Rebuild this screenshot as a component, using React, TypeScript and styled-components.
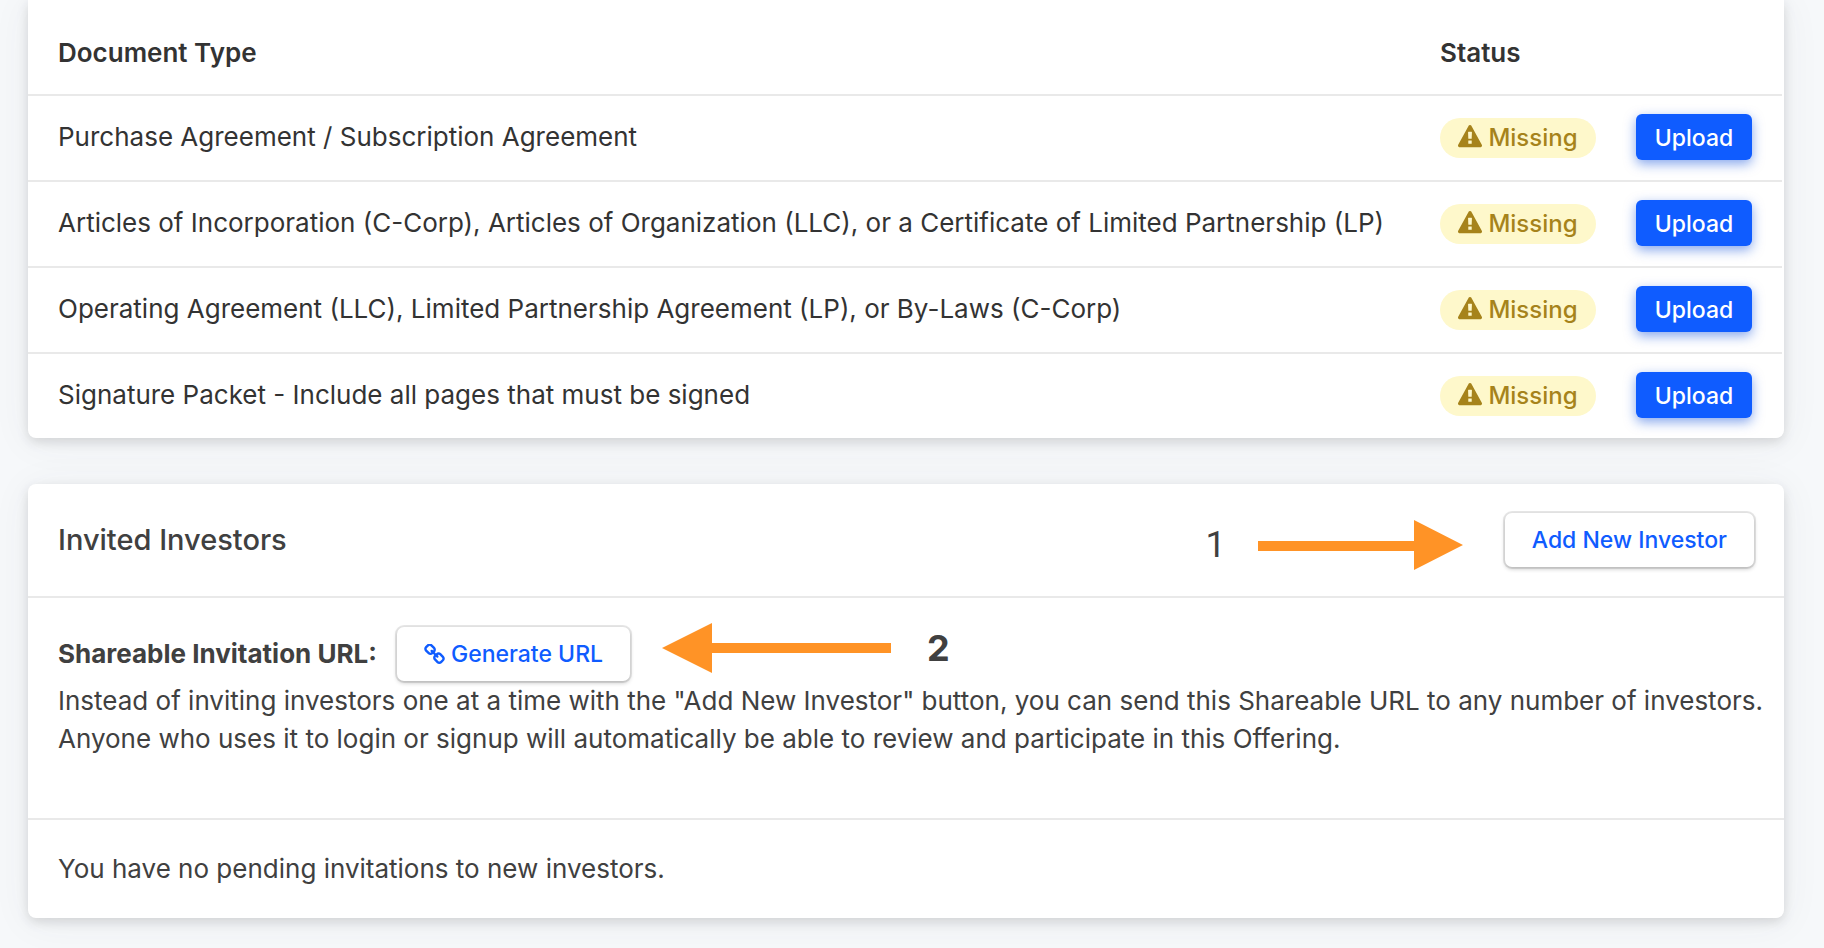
import React from 'react';
import styled, { createGlobalStyle, css } from 'styled-components';

const GlobalStyle = createGlobalStyle`
  *, *::before, *::after { box-sizing: border-box; }
  body {
    margin: 0;
    background: #f6f8fa;
    color: #404040;
    font-family: Inter, "Liberation Sans", sans-serif;
    font-size: 26px;
    line-height: 38px;
  }
  button { font-family: inherit; cursor: pointer; }
`;

const Page = styled.main`
  display: flex;
  flex-direction: column;
  gap: 46px;
  min-height: 100vh;
  padding: 0 40px 30px 28px;
`;

const Card = styled.section<{ $continued?: boolean }>`
  background: #fff;
  border-radius: ${({ $continued }) => ($continued ? '0 0 8px 8px' : '8px')};
  box-shadow: 0 4px 12px rgba(0, 0, 0, 0.13), 0 4px 40px rgba(60, 70, 80, 0.06);
  padding-right: ${({ $continued }) => ($continued ? '2px' : '0')};
`;

const DocumentTable = styled.table`
  width: 100%;
  border-collapse: separate;
  border-spacing: 0;
  color: #333;
`;

const HeadCell = styled.th`
  height: 96px;
  padding: 12px 0 0;
  border-bottom: 2px solid #e9e9e9;
  font-weight: 600;
  text-align: left;
  &:first-child { padding-left: 30px; }
`;

const Row = styled.tr`
  &:last-child > td { height: 84px; border-bottom: 0; }
`;

const Cell = styled.td<{ $width?: number }>`
  height: 86px;
  padding: 0;
  border-bottom: 2px solid #e9e9e9;
  ${({ $width }) => $width && css`width: ${$width}px;`}
  &:first-child { padding: 0 0 2px 30px; }
  &:last-child { padding-bottom: 2px; }
`;

const Badge = styled.span`
  display: flex;
  align-items: center;
  justify-content: center;
  gap: 6px;
  width: 156px;
  height: 40px;
  border-radius: 20px;
  background: #fef8cb;
  color: #a6831b;
  font-size: 24px;
  font-weight: 500;
  svg { margin-bottom: 2px; }
`;

const UploadButton = styled.button`
  display: block;
  width: 116px;
  height: 46px;
  padding: 2px 0 0;
  border: 0;
  border-radius: 6px;
  background: #0f5cff;
  box-shadow: 0 4px 12px rgba(15, 80, 220, 0.5);
  color: #fff;
  font-size: 23px;
  font-weight: 500;
`;

const OutlineButton = styled.button`
  display: inline-flex;
  align-items: center;
  gap: 6px;
  height: 54px;
  padding: 0 27px;
  border: 0;
  border-radius: 7px;
  background: #fff;
  box-shadow: 0 0 0 2px rgba(0, 0, 0, 0.09), 0 2px 4px rgba(0, 0, 0, 0.22);
  color: #0f5cff;
  font-size: 23px;
  font-weight: 500;
  white-space: nowrap;
`;

const CardHeader = styled.header`
  display: flex;
  align-items: center;
  height: 114px;
  padding: 0 30px;
  border-bottom: 2px solid #e9e9e9;
`;

const Title = styled.h2`
  flex: 1;
  margin: 0;
  font-size: 29px;
  font-weight: 500;
`;

const Callout = styled.div<{ $side: 'before' | 'after' }>`
  display: flex;
  align-items: center;
  font-size: 36px;
  ${({ $side }) =>
    $side === 'before'
      ? css`
          gap: 32px;
          margin-right: 42px;
          padding-top: 10px;
          font-family: Roboto, "Liberation Sans", sans-serif;
        `
      : css`
          gap: 36px;
          margin-left: 32px;
          padding-bottom: 12px;
          font-weight: 700;
        `}
  svg { display: block; }
`;

const ShareSection = styled.div`
  padding: 28px 20px 60px 30px;
  border-bottom: 2px solid #e9e9e9;
`;

const ShareRow = styled.div`
  display: flex;
  align-items: center;
  height: 56px;
`;

const ShareLabel = styled.strong`
  margin-right: 20px;
  font-weight: 700;
`;

const Paragraph = styled.p`
  margin: 0;
`;

const EmptyNote = styled.p`
  margin: 0;
  padding: 30px;
`;

const WarningIcon = () => (
  <svg width="24" height="24" viewBox="0 0 1792 1792" fill="currentColor" aria-hidden="true">
    <path d="M1024 1375v-190q0-14-9.5-23.5t-22.5-9.5h-192q-13 0-22.5 9.5t-9.5 23.5v190q0 14 9.5 23.5t22.5 9.5h192q13 0 22.5-9.5t9.5-23.5zm-2-374l18-459q0-12-10-19-13-11-24-11h-220q-11 0-24 11-10 7-10 21l17 457q0 10 10 16.5t24 6.5h185q14 0 23.5-6.5t10.5-16.5zm-14-934l768 1408q35 63-2 126-17 29-46.5 46t-63.5 17h-1536q-34 0-63.5-17t-46.5-46q-37-63-2-126l768-1408q17-31 47-49t65-18 65 18 47 49z" />
  </svg>
);

const LinkIcon = () => (
  <svg width="21" height="21" viewBox="64 64 1664 1664" fill="currentColor" aria-hidden="true">
    <path d="M1520 1216q0-40-28-68l-208-208q-28-28-68-28-42 0-72 32 3 3 19 18.5t21.5 21.5 15 19 13 25.5 3.5 27.5q0 40-28 68t-68 28q-15 0-27.5-3.5t-25.5-13-19-15-21.5-21.5-18.5-19q-33 31-33 73 0 40 28 68l206 207q27 27 68 27 40 0 68-26l147-146q28-28 28-67zm-703-705q0-40-28-68l-206-207q-28-28-68-28-39 0-68 27l-147 146q-28 28-28 67 0 40 28 68l208 208q27 27 68 27 42 0 72-31-3-3-19-18.5t-21.5-21.5-15-19-13-25.5-3.5-27.5q0-40 28-68t68-28q15 0 27.5 3.5t25.5 13 19 15 21.5 21.5 18.5 19q33-31 33-73zm895 705q0 120-85 203l-147 146q-83 83-203 83-121 0-204-85l-206-207q-83-83-83-203 0-123 88-209l-88-88q-86 88-208 88-120 0-204-84l-208-208q-84-84-84-204t85-203l147-146q83-83 203-83 121 0 204 85l206 207q83 83 83 203 0 123-88 209l88 88q86-88 208-88 120 0 204 84l208 208q84 84 84 204z" />
  </svg>
);

const ArrowRight = () => (
  <svg width="205" height="50" viewBox="0 0 205 50" fill="#ff9326" aria-hidden="true">
    <path d="M0 21H156V0L205 25L156 50V31H0Z" />
  </svg>
);

const ArrowLeft = () => (
  <svg width="229" height="50" viewBox="0 0 229 50" fill="#ff9326" aria-hidden="true">
    <path d="M229 20H50V0L0 25L50 50V30H229Z" />
  </svg>
);

const documents = [
  'Purchase Agreement / Subscription Agreement',
  'Articles of Incorporation (C-Corp), Articles of Organization (LLC), or a Certificate of Limited Partnership (LP)',
  'Operating Agreement (LLC), Limited Partnership Agreement (LP), or By-Laws (C-Corp)',
  'Signature Packet - Include all pages that must be signed',
];

export default function App() {
  return (
    <>
      <GlobalStyle />
      <Page>
        <Card $continued>
          <DocumentTable>
            <thead>
              <tr>
                <HeadCell scope="col">Document Type</HeadCell>
                <HeadCell scope="col" colSpan={2}>Status</HeadCell>
              </tr>
            </thead>
            <tbody>
              {documents.map((name) => (
                <Row key={name}>
                  <Cell>{name}</Cell>
                  <Cell $width={196}>
                    <Badge><WarningIcon />Missing</Badge>
                  </Cell>
                  <Cell $width={146}>
                    <UploadButton type="button" aria-label={`Upload ${name}`}>Upload</UploadButton>
                  </Cell>
                </Row>
              ))}
            </tbody>
          </DocumentTable>
        </Card>

        <Card>
          <CardHeader>
            <Title>Invited Investors</Title>
            <Callout $side="before">1<ArrowRight /></Callout>
            <OutlineButton type="button">Add New Investor</OutlineButton>
          </CardHeader>
          <ShareSection>
            <ShareRow>
              <ShareLabel>Shareable Invitation URL:</ShareLabel>
              <OutlineButton type="button"><LinkIcon />Generate URL</OutlineButton>
              <Callout $side="after"><ArrowLeft />2</Callout>
            </ShareRow>
            <Paragraph>
              Instead of inviting investors one at a time with the "Add New Investor" button, you can send this
              Shareable URL to any number of investors. Anyone who uses it to login or signup will automatically be
              able to review and participate in this Offering.
            </Paragraph>
          </ShareSection>
          <EmptyNote>You have no pending invitations to new investors.</EmptyNote>
        </Card>
      </Page>
    </>
  );
}
